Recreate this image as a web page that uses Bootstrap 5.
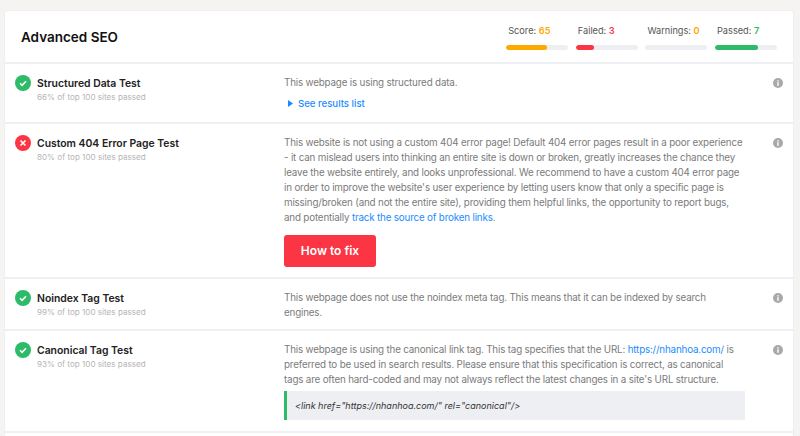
<!DOCTYPE html>
<html lang="en">
<head>
<meta charset="utf-8">
<link href="https://cdn.jsdelivr.net/npm/bootstrap@5.3.0/dist/css/bootstrap.min.css" rel="stylesheet">
<style>
html,body{height:436px;overflow:hidden}
body{background:#f5f4f2;font-family:"Inter","Liberation Sans",sans-serif;color:#7b7b7b;font-size:9.8px;line-height:15px}
.seo-card{margin:10px 6px 0 4px;background:#fff;border:1px solid #eeeff3;border-radius:4px 4px 0 0;border-bottom:0;padding-bottom:20px}
.seo-head{height:53px;border-bottom:2px solid #eeeff3;padding:0 16px 0 16px}
.seo-title{font-size:13.5px;font-weight:600;color:#111;margin:0;line-height:20px}
.stat{width:62px;margin-left:7.6px;font-size:9.2px;color:#555;line-height:14px}
.stat-label{padding-left:2px;margin-bottom:7px;white-space:nowrap}
.bar-track{height:5px;border-radius:3px;background:#eeeff3;overflow:hidden}
.bar-fill{height:5px;border-radius:3px}
.c-orange{color:#ffa800}.c-red{color:#fc3544}.c-green{color:#2ebb68}
.b-orange{background:#ffa800}.b-red{background:#fc3544}.b-green{background:#2ebb68}
.seo-row{border-bottom:2px solid #eeeff3;padding:11px 10px 0 10px}
.r1{height:60px}.r2{height:155px}.r3{height:52px}.r4{height:102px}
.status{width:16px;height:16px;flex:none;margin-right:6px}
.col-name{width:247px;flex:none}
.test-name{font-size:10.4px;font-weight:600;color:#222;line-height:15px;margin-top:1px}
.test-sub{font-size:8.1px;color:#b5b5b5;line-height:12px}
.col-text{width:461px;flex:none}
.col-text p{margin:0;font-size:9.8px;letter-spacing:-.17px;line-height:15px}
.col-text p.narrow-copy{max-width:456px}
.lnk{color:#1a8cff;text-decoration:none}
.see{display:flex;align-items:center;color:#1a8cff;font-weight:500;margin-top:6px;margin-left:4px;font-size:9.6px}
.see svg{margin-right:5px}
.info{width:10px;height:10px;margin-left:28px;margin-top:3px;flex:none}
.fix-btn{background:#fc3544;color:#fff;border:0;border-radius:3px;width:92px;height:32px;font-size:12px;font-weight:600;margin-top:10px;padding:0}
.code-box{margin-top:4px;background:#eeeff3;border-left:3px solid #2ebb68;height:29px;display:flex;align-items:center;padding-left:8px;font-style:italic;color:#333;font-size:9px}
</style>
</head>
<body>
<div class="seo-card">
  <div class="seo-head d-flex align-items-center justify-content-between">
    <h2 class="seo-title">Advanced SEO</h2>
    <div class="d-flex">
      <div class="stat"><div class="stat-label">Score: <b class="c-orange fw-semibold">65</b></div><div class="bar-track"><div class="bar-fill b-orange" style="width:65%"></div></div></div>
      <div class="stat"><div class="stat-label">Failed: <b class="c-red fw-semibold">3</b></div><div class="bar-track"><div class="bar-fill b-red" style="width:30%"></div></div></div>
      <div class="stat"><div class="stat-label">Warnings: <b class="c-orange fw-semibold">0</b></div><div class="bar-track"></div></div>
      <div class="stat"><div class="stat-label">Passed: <b class="c-green fw-semibold">7</b></div><div class="bar-track"><div class="bar-fill b-green" style="width:70%"></div></div></div>
    </div>
  </div>

  <div class="seo-row r1 d-flex">
    <svg class="status" viewBox="0 0 16 16"><circle cx="8" cy="8" r="8" fill="#2ebb68"/><path d="M5 8.2l2.1 2.1L11 6.2" fill="none" stroke="#fff" stroke-width="1.6"/></svg>
    <div class="col-name"><div class="test-name">Structured Data Test</div><div class="test-sub">66% of top 100 sites passed</div></div>
    <div class="col-text"><p>This webpage is using structured data.</p>
      <div class="see"><svg width="5" height="7" viewBox="0 0 5 7"><path d="M0 0l5 3.5L0 7z" fill="#1a8cff"/></svg>See results list</div></div>
    <svg class="info" viewBox="0 0 10 10"><circle cx="5" cy="5" r="5" fill="#a9a9a9"/><rect x="4.3" y="4.2" width="1.4" height="3.6" fill="#fff"/><rect x="4.3" y="2.2" width="1.4" height="1.3" fill="#fff"/></svg>
  </div>

  <div class="seo-row r2 d-flex">
    <svg class="status" viewBox="0 0 16 16"><circle cx="8" cy="8" r="8" fill="#fc3544"/><path d="M5.5 5.5l5 5M10.5 5.5l-5 5" fill="none" stroke="#fff" stroke-width="1.6"/></svg>
    <div class="col-name"><div class="test-name">Custom 404 Error Page Test</div><div class="test-sub">80% of top 100 sites passed</div></div>
    <div class="col-text"><p>This website is not using a custom 404 error page! Default 404 error pages result in a poor experience - it can mislead users into thinking an entire site is down or broken, greatly increases the chance they leave the website entirely, and looks unprofessional. We recommend to have a custom 404 error page in order to improve the website's user experience by letting users know that only a specific page is missing/broken (and not the entire site), providing them helpful links, the opportunity to report bugs, and potentially <a class="lnk" href="#">track the source of broken links</a>.</p>
      <button class="fix-btn btn" type="button">How to fix</button></div>
    <svg class="info" viewBox="0 0 10 10"><circle cx="5" cy="5" r="5" fill="#a9a9a9"/><rect x="4.3" y="4.2" width="1.4" height="3.6" fill="#fff"/><rect x="4.3" y="2.2" width="1.4" height="1.3" fill="#fff"/></svg>
  </div>

  <div class="seo-row r3 d-flex">
    <svg class="status" viewBox="0 0 16 16"><circle cx="8" cy="8" r="8" fill="#2ebb68"/><path d="M5 8.2l2.1 2.1L11 6.2" fill="none" stroke="#fff" stroke-width="1.6"/></svg>
    <div class="col-name"><div class="test-name">Noindex Tag Test</div><div class="test-sub">99% of top 100 sites passed</div></div>
    <div class="col-text"><p>This webpage does not use the noindex meta tag. This means that it can be indexed by search engines.</p></div>
    <svg class="info" viewBox="0 0 10 10"><circle cx="5" cy="5" r="5" fill="#a9a9a9"/><rect x="4.3" y="4.2" width="1.4" height="3.6" fill="#fff"/><rect x="4.3" y="2.2" width="1.4" height="1.3" fill="#fff"/></svg>
  </div>

  <div class="seo-row r4 d-flex">
    <svg class="status" viewBox="0 0 16 16"><circle cx="8" cy="8" r="8" fill="#2ebb68"/><path d="M5 8.2l2.1 2.1L11 6.2" fill="none" stroke="#fff" stroke-width="1.6"/></svg>
    <div class="col-name"><div class="test-name">Canonical Tag Test</div><div class="test-sub">93% of top 100 sites passed</div></div>
    <div class="col-text"><p class="narrow-copy">This webpage is using the canonical link tag. This tag specifies that the URL: <a class="lnk" href="#">https://nhanhoa.com/</a> is preferred to be used in search results. Please ensure that this specification is correct, as canonical tags are often hard-coded and may not always reflect the latest changes in a site's URL structure.</p>
      <div class="code-box">&lt;link href="https://nhanhoa.com/" rel="canonical"/&gt;</div></div>
    <svg class="info" viewBox="0 0 10 10"><circle cx="5" cy="5" r="5" fill="#a9a9a9"/><rect x="4.3" y="4.2" width="1.4" height="3.6" fill="#fff"/><rect x="4.3" y="2.2" width="1.4" height="1.3" fill="#fff"/></svg>
  </div>
</div>
</body>
</html>
